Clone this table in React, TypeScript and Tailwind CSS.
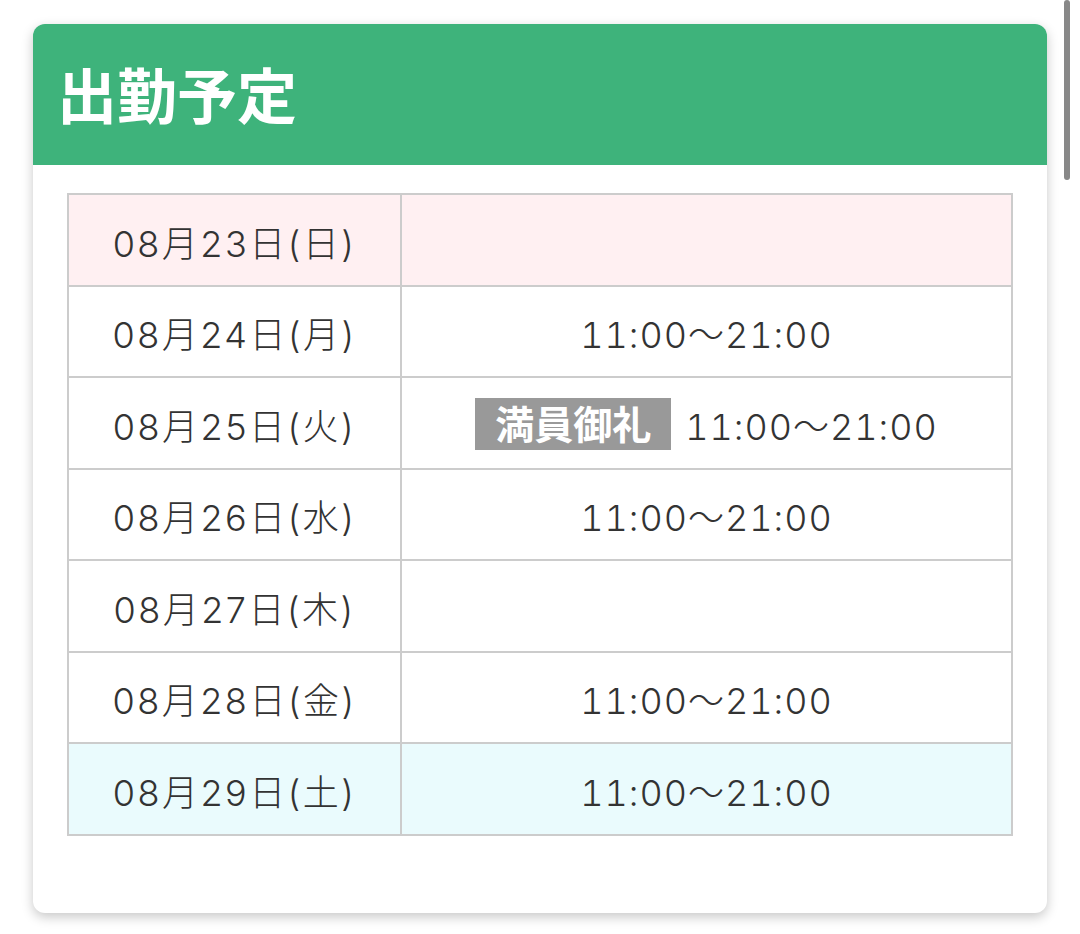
import React from "react";

const rows: { date: string; time?: string; full?: boolean; bg: string }[] = [
  { date: "08月23日(日)", bg: "bg-[#fff0f2]" },
  { date: "08月24日(月)", time: "11:00〜21:00", bg: "bg-white" },
  { date: "08月25日(火)", time: "11:00〜21:00", full: true, bg: "bg-white" },
  { date: "08月26日(水)", time: "11:00〜21:00", bg: "bg-white" },
  { date: "08月27日(木)", bg: "bg-white" },
  { date: "08月28日(金)", time: "11:00〜21:00", bg: "bg-white" },
  { date: "08月29日(土)", time: "11:00〜21:00", bg: "bg-[#eafbfd]" },
];

const body = { fontFamily: 'Inter, "Noto Sans CJK JP", sans-serif' };
const jp = { fontFamily: '"Noto Sans CJK JP", "Noto Sans", sans-serif' };

export default function App() {
  return (
    <div className="relative w-[1080px] h-[934px] bg-white overflow-hidden pt-[24px] pl-[33px]" style={jp}>
      <div className="w-[1014px] h-[889px] bg-white rounded-[12px] shadow-[0_4px_12px_rgba(0,0,0,0.22)] overflow-hidden flex flex-col">
        <div className="h-[141px] bg-[#3eb37b] flex items-center pl-[24px] shrink-0">
          <h1 className="text-white font-bold text-[60px] leading-none pb-[4px]">出勤予定</h1>
        </div>
        <div className="pt-[28px] px-[34px]">
          <table className="w-full border-collapse border-2 border-[#cccccc] text-[#333333]" style={body}>
            <tbody>
              {rows.map((r) => (
                <tr key={r.date} className={`${r.bg} h-[91.5px]`}>
                  <td className="w-[333px] border-2 border-[#cccccc] text-center text-[36px] font-light tracking-[2.5px] leading-none p-0 pt-[8px]">
                    {r.date}
                  </td>
                  <td className="border-2 border-[#cccccc] text-center text-[36px] font-light tracking-[1px] tabular-nums leading-none p-0 pt-[8px]">
                    {r.time && (
                      <div className="flex items-center justify-center">
                        {r.full && (
                          <span
                            className="inline-flex items-center justify-center bg-[#999999] text-white font-bold text-[39px] tracking-normal leading-none px-[20px] h-[52px] mr-[14px] pb-[3px] -mt-[6px]"
                            style={jp}
                          >
                            満員御礼
                          </span>
                        )}
                        <span>{r.time}</span>
                      </div>
                    )}
                  </td>
                </tr>
              ))}
            </tbody>
          </table>
        </div>
      </div>
      <div className="absolute right-[10px] top-0 w-[6px] h-[180px] rounded-full bg-[#888888]" />
    </div>
  );
}
